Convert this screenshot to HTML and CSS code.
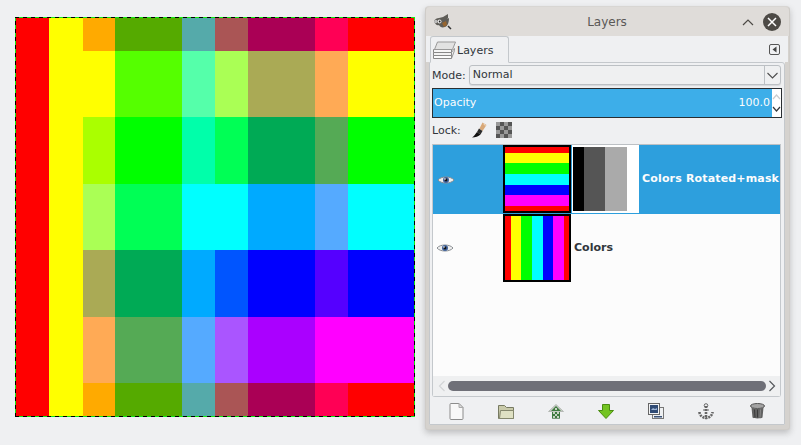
FILE: index.html
```html
<!DOCTYPE html>
<html lang="en">
<head>
<meta charset="utf-8">
<title>Layers</title>
<link rel="stylesheet" href="styles.css">
</head>
<body>
<main class="canvas">
  <div class="art">
    <i class="r"></i><i class="y"></i><i class="o"></i><i class="olive"></i><i class="teal"></i><i class="brick"></i><i class="wine"></i><i class="rose"></i><i class="r"></i>
    <i class="r"></i><i class="y"></i><i class="y"></i><i class="lime"></i><i class="mint"></i><i class="pale"></i><i class="khaki"></i><i class="peach"></i><i class="y"></i>
    <i class="r"></i><i class="y"></i><i class="chart"></i><i class="g"></i><i class="sea"></i><i class="spring"></i><i class="forest"></i><i class="moss"></i><i class="g"></i>
    <i class="r"></i><i class="y"></i><i class="pale"></i><i class="spring"></i><i class="c"></i><i class="c"></i><i class="azure"></i><i class="sky"></i><i class="c"></i>
    <i class="r"></i><i class="y"></i><i class="khaki"></i><i class="forest"></i><i class="azure"></i><i class="royal"></i><i class="b"></i><i class="indigo"></i><i class="b"></i>
    <i class="r"></i><i class="y"></i><i class="peach"></i><i class="moss"></i><i class="sky"></i><i class="lilac"></i><i class="violet"></i><i class="m"></i><i class="m"></i>
    <i class="r"></i><i class="y"></i><i class="o"></i><i class="olive"></i><i class="teal"></i><i class="brick"></i><i class="wine"></i><i class="rose"></i><i class="r"></i>
  </div>
</main>

<section class="window">
  <header class="titlebar">
    <svg class="wilber" width="20" height="16" viewBox="0 0 20 16">
      <path d="M1 7c1-2 3-3 5-3l4-1 5-3 0 4-1 1 2-1c0 4-1 8-4 9-3 1-5 0-6-2-2 1-4-1-5-4z" fill="#5f5d58"/>
      <circle cx="2.800" cy="7.500" r="1.700" fill="#bdbdbd"/><circle cx="6.500" cy="7.500" r="2" fill="#e4e4e4"/>
      <circle cx="6.700" cy="7.500" r=".9" fill="#222"/>
      <path d="M9 9l4-2 1 4-3 2z" fill="#96652f"/>
      <path d="M15 12l3 3" stroke="#333" stroke-width="1.500"/>
    </svg>
    <h1 class="title">Layers</h1>
    <div class="controls">
      <svg width="12" height="8" viewBox="0 0 12 8"><path d="M1 7l5-5 5 5" fill="none" stroke="#4d4a46" stroke-width="1.200"/></svg>
      <span class="close">
        <svg width="10" height="10" viewBox="0 0 10 10"><path d="M1 1l8 8M9 1l-8 8" stroke="#fff" stroke-width="1.500"/></svg>
      </span>
    </div>
  </header>

  <div class="dock">
    <div class="tabs">
      <div class="tab">
        <svg width="24" height="24" viewBox="0 0 24 24">
          <path d="M1.500 17.500h18l-.0 3h-18z" fill="#fbfbfb" stroke="#888"/>
          <path d="M1.500 14.500h18l-.0 3h-18z" fill="#f2f2f2" stroke="#888"/>
          <path d="M1.500 11.500h18l-.0 3h-18z" fill="#f6f6f6" stroke="#888"/>
          <path d="M2.500 11.500l3-7.500h18l-3 7.500z" fill="#e2e2e2" stroke="#999"/>
          <path d="M19.500 20.500l3-8v-2M19.500 14.500l3-4" fill="none" stroke="#999"/>
        </svg>
        <span>Layers</span>
      </div>
      <span class="tab-menu">
        <svg width="11" height="11" viewBox="0 0 11 11"><rect x=".5" y=".5" width="10" height="10" rx="1.500" fill="none" stroke="#555"/><path d="M7.500 2.500v6l-4-3z" fill="#444"/></svg>
      </span>
    </div>

    <div class="panel">
      <div class="mode-row">
        <span>Mode:</span>
        <div class="combo">
          <span class="combo-value">Normal</span>
          <span class="combo-arrow">
            <svg width="11" height="7" viewBox="0 0 11 7"><path d="M.5 1l5 5 5-5" fill="none" stroke="#4d4d4d" stroke-width="1.100"/></svg>
          </span>
        </div>
      </div>

      <div class="opacity">
        <div class="opacity-fill"><span>Opacity</span><span>100.0</span></div>
        <div class="spin">
          <svg width="9" height="6" viewBox="0 0 9 6"><path d="M1 5l3.500-4 3.500 4" fill="none" stroke="#c9ccce" stroke-width="1.200"/></svg>
          <svg width="9" height="6" viewBox="0 0 9 6"><path d="M1 1l3.500 4 3.500-4" fill="none" stroke="#33373b" stroke-width="1.200"/></svg>
        </div>
      </div>

      <div class="lock-row">
        <span>Lock:</span>
        <svg class="brush" width="16" height="16" viewBox="0 0 16 16">
          <path d="M10.500.5l4 2.500-4 6-3-2.500z" fill="#d8a878"/>
          <path d="M7 6.500l3.500 2.500-2 3.500-3.500-2.500z" fill="#2b2b2b"/>
          <path d="M5 10l3.500 2.500c-2 2-5 3-8.500 3 2-1 3-3 5-5.500z" fill="#111"/>
          <path d="M11.500 2l2 1.500" stroke="#f5e2c8"/>
        </svg>
        <span class="checker"></span>
      </div>

      <div class="list">
        <div class="rows">
          <div class="row row-active">
            <svg class="eye" width="18" height="10" viewBox="0 0 18 10">
              <path d="M1 5c3-4 13-4 16 0-3 4-13 4-16 0z" fill="#eee" stroke="#8a8f93"/>
              <circle cx="9" cy="5" r="3" fill="#41639c"/><circle cx="9" cy="5" r="1.400" fill="#111"/><circle cx="8" cy="4" r=".8" fill="#fff"/>
            </svg>
            <div class="thumb thumb-h">
              <i class="s6 r"></i><i class="s10 y"></i><i class="s11 g"></i><i class="s11 c"></i><i class="s10 b"></i><i class="s11 m"></i><i class="s5 r"></i>
            </div>
            <div class="mask"><i class="mask-a"></i><i class="mask-b"></i><i class="mask-c"></i></div>
            <span class="name name-active">Colors Rotated+mask</span>
          </div>
          <div class="row">
            <svg class="eye eye-second" width="18" height="10" viewBox="0 0 18 10">
              <path d="M1 5c3-4 13-4 16 0-3 4-13 4-16 0z" fill="#eee" stroke="#8a8f93"/>
              <circle cx="9" cy="5" r="3" fill="#41639c"/><circle cx="9" cy="5" r="1.400" fill="#111"/><circle cx="8" cy="4" r=".8" fill="#fff"/>
            </svg>
            <div class="thumb thumb-v">
              <i class="v6 r"></i><i class="v10 y"></i><i class="v11 g"></i><i class="v11 c"></i><i class="v10 b"></i><i class="v11 m"></i><i class="v5 r"></i>
            </div>
            <span class="name">Colors</span>
          </div>
        </div>
        <div class="scrollbar">
          <svg width="8" height="12" viewBox="0 0 8 12"><path d="M6.500 1l-5 5 5 5" fill="none" stroke="#d3d5d7" stroke-width="1.200"/></svg>
          <span class="thumb-bar"></span>
          <svg width="8" height="12" viewBox="0 0 8 12"><path d="M1.500 1l5 5-5 5" fill="none" stroke="#55585c" stroke-width="1.200"/></svg>
        </div>
      </div>

      <footer class="actions">
        <svg width="15" height="17" viewBox="0 0 15 17"><path d="M2 .5h8l4 4v11a1 1 0 0 1-1 1h-11a1 1 0 0 1-1-1v-14a1 1 0 0 1 1-1z" fill="#f8f8f8" stroke="#8c8c8c"/><path d="M10 .5v4h4z" fill="#dcdcdc" stroke="#aaa"/></svg>
        <svg width="16" height="15" viewBox="0 0 16 15"><path d="M.5 14.500v-13h6l2 2h7v11z" fill="#c9caaa" stroke="#777a62"/><path d="M1.500 14.500l1-8h13v8z" fill="#dfe1c4" stroke="#85886e"/></svg>
        <svg width="16" height="15" viewBox="0 0 16 15"><path d="M8 .5l7.500 7h-4v7h-7v-7h-4z" fill="#c5cdc3" stroke="#b6bab6"/><path d="M4 8h8v6.500h-8zM8 2l5 5h-10z" fill="#3e7a3f"/><path d="M5 8h2v2h-2zM9 8h2v2h-2zM7 10h2v2h-2zM5 12h2v2h-2zM9 12h2v2h-2zM7 4h2v2h-2z" fill="#c6d2c3"/></svg>
        <svg width="16" height="15" viewBox="0 0 16 15"><path d="M4.500.5h7v6h4l-7.500 8-7.500-8h4z" fill="#74c422" stroke="#4b8d12"/></svg>
        <svg width="16" height="16" viewBox="0 0 16 16"><rect x="4.500" y="4.500" width="11" height="11" fill="#eef0f2" stroke="#777"/><rect x="6" y="13" width="8" height="1.500" fill="#3b5278"/><rect x=".5" y=".5" width="11" height="11" fill="#f2f3f4" stroke="#666"/><rect x="2" y="2" width="8" height="8" fill="#2f4a74"/><path d="M3 7l2-2 2 1 2-1v2z" fill="#9db4d6"/></svg>
        <svg width="16" height="17" viewBox="0 0 16 17"><g fill="none" stroke="#666" stroke-width="2.600" stroke-dasharray="2 1"><path d="M8 3v13"/><path d="M1.500 9c0 3 3 6 6.500 6s6.500-3 6.500-6"/></g><circle cx="8" cy="2.500" r="1.800" fill="none" stroke="#666"/><path d="M5 7h6" stroke="#666"/></svg>
        <svg class="trash" width="15" height="16" viewBox="0 0 15 16"><ellipse cx="7.500" cy="3" rx="7" ry="2.500" fill="#a3a3a3" stroke="#555"/><path d="M1.500 4.500l1 10c1.500 1.200 8.500 1.200 10 0l1-10c-3 1.500-9 1.500-12 0z" fill="#626262"/><path d="M4.500 6.500l.5 8M7.500 6.500v8" stroke="#3a3a3a"/><path d="M10.500 6.500l-.5 8" stroke="#888"/></svg>
      </footer>
    </div>
  </div>
</section>
</body>
</html>
```

FILE: styles.css
```css
* {
  box-sizing: border-box;
}

html,
body {
  height: 100%;
  margin: 0;
}

body {
  display: flex;
  align-items: flex-start;
  overflow: hidden;
  background: #eff0f2;
  font-family: "DejaVu Sans", sans-serif;
  font-size: 11px;
  color: #31363b;
}

/* Canvas */
.canvas {
  width: 400px;
  height: 400px;
  margin: 17px 0 0 15px;
  padding: 1px;
  flex: none;
  background:
    repeating-linear-gradient(90deg, #000 0 4px, #11ee11 4px 8px) 0 0 / 100% 1px no-repeat,
    repeating-linear-gradient(90deg, #000 0 4px, #11ee11 4px 8px) 0 100% / 100% 1px no-repeat,
    repeating-linear-gradient(0deg, #000 0 4px, #11ee11 4px 8px) 0 0 / 1px 100% no-repeat,
    repeating-linear-gradient(0deg, #000 0 4px, #11ee11 4px 8px) 100% 0 / 1px 100% no-repeat;
}

.art {
  display: grid;
  width: 398px;
  height: 398px;
  grid-template-columns: 33px 34px 32px 67px 33px 33px 67px 33px 66px;
  grid-template-rows: 33px 66px 67px 66px 67px 66px 33px;
}

.art i,
.thumb i,
.mask i {
  display: block;
}

.r { background: #f00; }
.y { background: #ff0; }
.g { background: #0f0; }
.c { background: #0ff; }
.b { background: #00f; }
.m { background: #f0f; }
.o { background: #fa0; }
.olive { background: #5a0; }
.teal { background: #5aa; }
.brick { background: #a55; }
.wine { background: #a05; }
.rose { background: #f05; }
.lime { background: #5f0; }
.mint { background: #5fa; }
.pale { background: #af5; }
.khaki { background: #aa5; }
.peach { background: #fa5; }
.chart { background: #af0; }
.sea { background: #0fa; }
.spring { background: #0f5; }
.forest { background: #0a5; }
.moss { background: #5a5; }
.azure { background: #0af; }
.sky { background: #5af; }
.royal { background: #05f; }
.indigo { background: #50f; }
.lilac { background: #a5f; }
.violet { background: #a0f; }

/* Window */
.window {
  display: flex;
  flex-direction: column;
  flex: none;
  width: 365px;
  height: 424px;
  margin: 6px 0 0 10px;
  border: 1px solid #cfccc8;
  border-top-color: #d8d6d3;
  border-radius: 4px 4px 3px 3px;
  background: #d5d2ce;
  box-shadow: 0 3px 6px rgba(60, 60, 60, 0.28);
}

.titlebar {
  display: grid;
  flex: none;
  grid-template-columns: 1fr auto 1fr;
  align-items: center;
  height: 29px;
  padding: 0 8px 0 7px;
  background: #dfdcd9;
  border-radius: 4px 4px 0 0;
}

.title {
  margin: 0;
  font-size: 12px;
  font-weight: 400;
  text-align: center;
  color: #5a5856;
}

.controls {
  display: flex;
  align-items: center;
  justify-content: flex-end;
  gap: 9px;
}

.close {
  display: flex;
  align-items: center;
  justify-content: center;
  width: 18px;
  height: 18px;
  border-radius: 50%;
  background: #4d4a46;
}

.dock {
  display: flex;
  flex: 1;
  flex-direction: column;
  min-height: 0;
  margin: 0 4px 4px 3px;
  background: #eff0f2;
}

.tabs {
  display: flex;
  flex: none;
  align-items: center;
  justify-content: space-between;
  height: 26px;
  margin: 0 -3px;
  padding-left: 4px;
  padding-right: 8px;
  background: #eff0f2;
}

.tab {
  display: flex;
  align-items: center;
  gap: 1px;
  width: 79px;
  height: 27px;
  margin-bottom: -1px;
  padding: 1px 0 0 1px;
  position: relative;
  z-index: 1;
  border: 1px solid #c4c8cc;
  border-bottom-color: #eff0f2;
  border-radius: 3px 3px 0 0;
  background: #eff0f2;
}

.tab-menu {
  display: flex;
}

.panel {
  display: flex;
  flex: 1;
  flex-direction: column;
  min-height: 0;
  padding: 2px 2px 0;
  border: 1px solid #c4c8cc;
  border-radius: 0 3px 0 0;
}

.mode-row {
  display: flex;
  flex: none;
  align-items: center;
  gap: 3px;
  height: 20px;
}

.combo {
  display: flex;
  flex: 1;
  align-items: stretch;
  height: 20px;
  margin-right: 1px;
  border: 1px solid #bcc0c4;
  border-radius: 3px;
  background: #eff0f1;
  box-shadow: 0 1px 1px rgba(0, 0, 0, 0.1);
}

.combo-value {
  flex: 1;
  padding-left: 3px;
  line-height: 18px;
}

.combo-arrow {
  display: flex;
  align-items: center;
  justify-content: center;
  width: 16px;
  border-left: 1px solid #bcc0c4;
}

.opacity {
  display: flex;
  flex: none;
  height: 30px;
  margin-top: 3px;
  border: 1px solid #2a2e32;
  background: #fff;
}

.opacity-fill {
  display: flex;
  flex: 1;
  align-items: center;
  justify-content: space-between;
  padding: 0 2px 2px 1px;
  background: #3daee9;
  color: #fcfcfc;
}

.spin {
  display: flex;
  flex: none;
  flex-direction: column;
  align-items: center;
  justify-content: space-evenly;
  width: 9px;
}

.lock-row {
  display: flex;
  flex: none;
  align-items: center;
  height: 26px;
  padding-bottom: 2px;
}

.brush {
  margin-left: 11px;
}

.checker {
  display: block;
  width: 16px;
  height: 16px;
  margin-left: 8px;
  background: conic-gradient(#555 25%, #999 0 50%, #555 0 75%, #999 0) 0 0 / 8px 8px;
}

.list {
  display: flex;
  flex: 1;
  flex-direction: column;
  min-height: 0;
  margin: 0 1px 0 0;
  border: 1px solid #c4c8cc;
  border-top-color: #bcc0c4;
  border-radius: 0 0 3px 3px;
}

.rows {
  flex: 1;
  min-height: 0;
  background: #fcfcfc;
}

.row {
  display: flex;
  align-items: center;
  height: 68px;
  padding-left: 3px;
  font-weight: 700;
}

.row-active {
  height: 69px;
  background: #2d9fdd;
  color: #fcfcfc;
}

.eye {
  flex: none;
  margin-right: 48px;
  margin-left: 1px;
}

.eye-second {
  margin-left: 0;
  margin-right: 49px;
}

.thumb {
  display: flex;
  flex: none;
  width: 68px;
  height: 68px;
  border: 2px solid #000;
  background: #000;
}

.thumb-h {
  flex-direction: column;
  margin-bottom: 1px;
}

.thumb-v {
  flex-direction: row;
}

.s5 { height: 5px; }
.s6 { height: 6px; }
.s10 { height: 10px; }
.s11 { height: 11px; }
.v5 { width: 5px; }
.v6 { width: 6px; }
.v10 { width: 10px; }
.v11 { width: 11px; }

.mask {
  display: flex;
  flex: none;
  width: 67px;
  height: 68px;
  margin: 0 3px 1px 1px;
  padding: 2px 12px 2px 1px;
  background: #fff;
}

.mask-a {
  width: 11px;
  background: #000;
}

.mask-b {
  width: 21px;
  background: #555;
}

.mask-c {
  width: 22px;
  background: #aaa;
}

.name {
  margin-left: 3px;
  margin-bottom: 2px;
  white-space: nowrap;
}

.name-active {
  margin-left: 0;
  letter-spacing: 0.16px;
}

.scrollbar {
  display: flex;
  flex: none;
  align-items: center;
  gap: 2px;
  height: 20px;
  padding: 0 4px 0 5px;
  background: #eff0f1;
}

.thumb-bar {
  flex: 1;
  height: 10px;
  border-radius: 5px;
  background: #6f7078;
}

.actions {
  display: grid;
  flex: none;
  grid-template-columns: repeat(7, 50px);
  align-items: center;
  justify-items: center;
  height: 27px;
  padding-top: 1px;
  margin-left: -1px;
}

.trash {
  margin-left: 3px;
}
```
